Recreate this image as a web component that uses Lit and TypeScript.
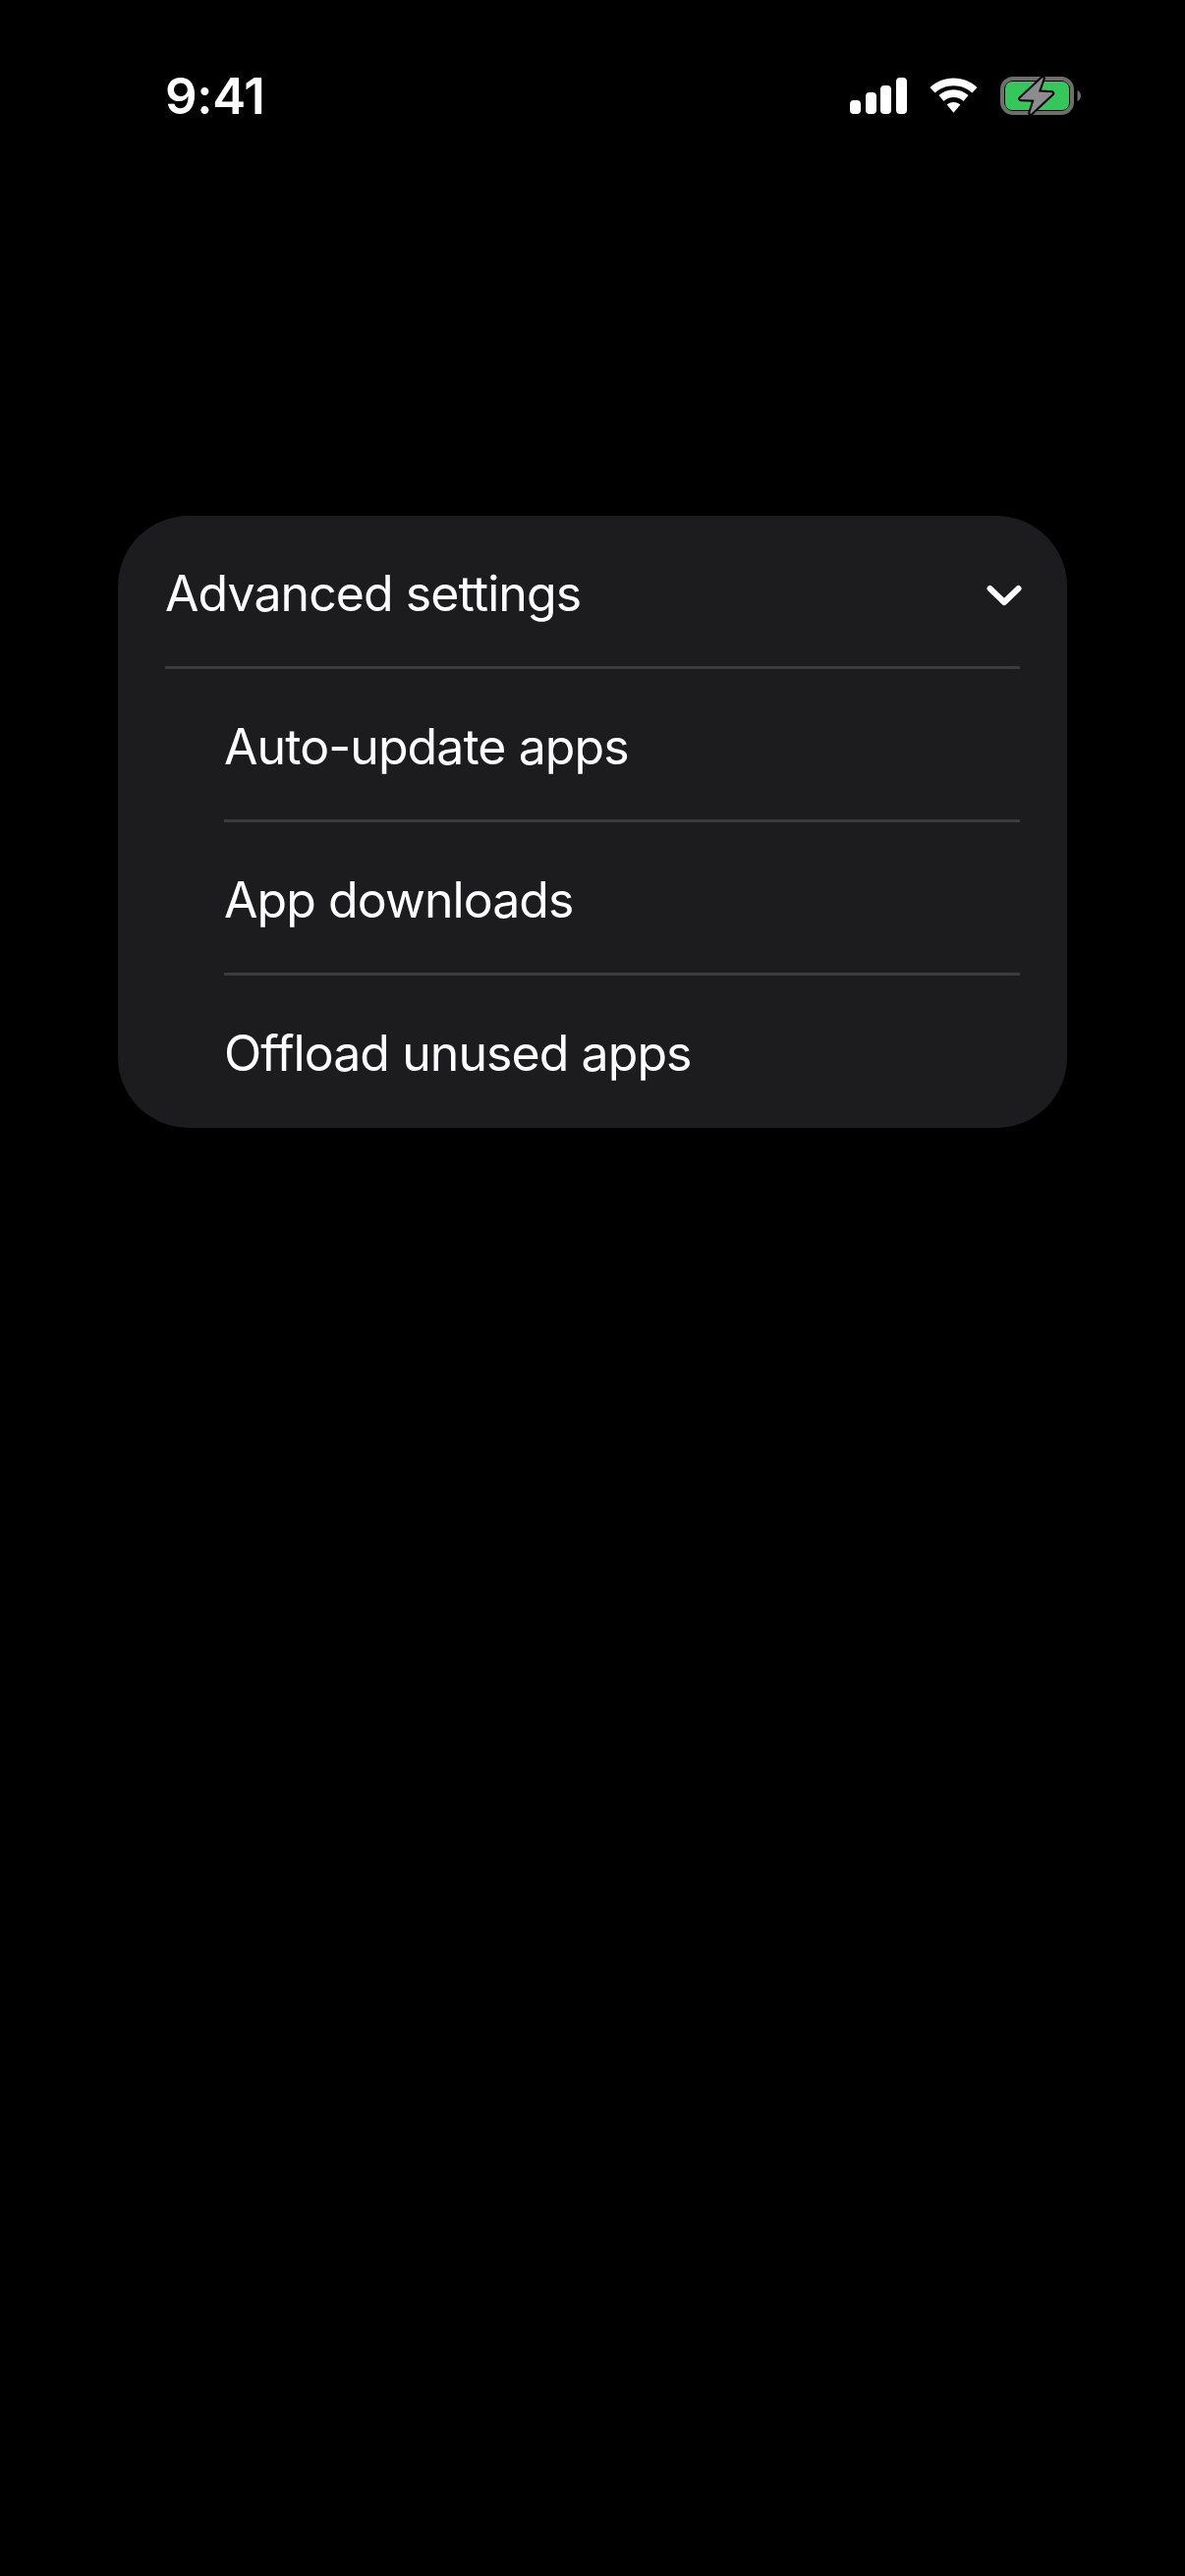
import { LitElement, html, css } from "lit";
import { customElement } from "lit/decorators.js";

const BOLT = "M43 2 21 22.500l14.500.5-4.500 14 21.500-20-14.500-1z";

@customElement("app-root")
export class AppRoot extends LitElement {
  static styles = css`
    :host {
      display: block;
      width: 1206px;
      height: 2622px;
      background: #000;
      color: #fff;
      font-family: Inter, "Noto Sans", sans-serif;
      overflow: hidden;
    }
    .status {
      display: flex;
      align-items: flex-start;
      justify-content: space-between;
      height: 525px;
      box-sizing: border-box;
      padding: 67px 106px 0 168px;
    }
    .time {
      font-size: 51px;
      line-height: 62px;
      font-weight: 600;
      letter-spacing: -0.3px;
    }
    .icons {
      display: flex;
      align-items: center;
      gap: 23px;
      padding-top: 11px;
    }
    svg {
      display: block;
    }
    .card {
      margin: 0 120px;
      background: #1c1c1e;
      border-radius: 72px;
      height: 623px;
      display: flex;
      flex-direction: column;
    }
    .row {
      display: flex;
      align-items: center;
      justify-content: space-between;
      height: 156px;
      box-sizing: border-box;
      margin-right: 48px;
      padding-top: 5px;
      font-size: 50px;
      font-weight: 375;
      letter-spacing: -0.93px;
      flex: none;
      border-bottom: 3px solid #3c3c3e;
    }
    .row.head {
      margin-left: 48px;
    }
    .row.sub {
      margin-left: 108px;
    }
    .row.sub.last {
      border-bottom-color: transparent;
    }
    .chev {
      margin-right: -4px;
    }
  `;

  render() {
    return html`
      <div class="status">
        <div class="time">9:41</div>
        <div class="icons">
          <svg width="58" height="38" viewBox="0 0 58 38" fill="#fff">
            <rect x="0" y="23" width="11" height="14" rx="4" />
            <rect x="16" y="15" width="11" height="22" rx="4" />
            <rect x="31" y="8" width="11" height="29" rx="4" />
            <rect x="47" y="0" width="11" height="37" rx="4" />
          </svg>
          <svg width="49" height="38" viewBox="0 0 50 38" fill="#fff">
            <path d="M25 0C34.600 0 43.200 3.700 49.600 9.800L44.300 15.500C39.200 10.800 32.500 8 25 8S10.800 10.800 5.700 15.500L.4 9.800C6.800 3.700 15.400 0 25 0z" />
            <path d="M25 12C30.800 12 36.300 14.200 40.400 18L35.200 24C32.500 21.500 28.900 20 25 20S17.500 21.500 14.800 24L9.600 18C13.700 14.200 19.200 12 25 12z" />
            <path d="M25 25C27.700 25 30.200 26 32 27.800L25 36 18 27.800C19.800 26 22.300 25 25 25z" />
          </svg>
          <svg width="82" height="40" viewBox="0 0 82 40">
            <rect x="2" y="2" width="71" height="35" rx="11" fill="none" stroke="#6e6e6e" stroke-width="4" />
            <rect x="5" y="5" width="65" height="29" rx="7" fill="#34c759" />
            <path d="M78.500 14c2 .6 3.500 3 3.500 5.500s-1.500 4.900-3.500 5.500z" fill="#6e6e6e" />
            <path d=${BOLT} fill="#000" stroke="#000" stroke-width="5.500" stroke-linejoin="round" />
            <path d=${BOLT} fill="#8c8c8c" stroke="#8c8c8c" stroke-width="1.500" stroke-linejoin="round" />
          </svg>
        </div>
      </div>
      <div class="card">
        <div class="row head">
          <span>Advanced settings</span>
          <svg class="chev" width="40" height="26" viewBox="0 0 40 26" fill="none">
            <path d="M5.500 8 20 22 34.500 8" stroke="#fff" stroke-width="6" stroke-linecap="round" stroke-linejoin="round" />
          </svg>
        </div>
        <div class="row sub"><span>Auto-update apps</span></div>
        <div class="row sub"><span>App downloads</span></div>
        <div class="row sub last"><span>Offload unused apps</span></div>
      </div>
    `;
  }
}
